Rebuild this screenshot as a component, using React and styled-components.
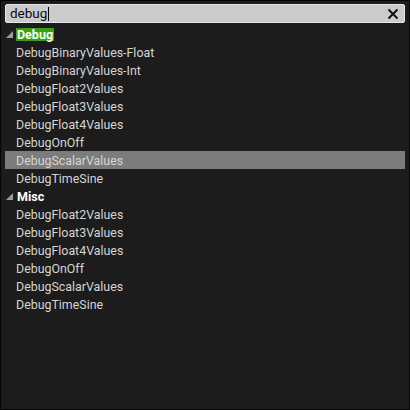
import styled, { createGlobalStyle } from "styled-components";

const Global = createGlobalStyle`
    html, body {
        margin: 0;
        padding: 0;
        background: #1b1b1b;
    }
    body {
        font-family: Roboto, "Liberation Sans", sans-serif;
    }
`;

const Panel = styled.main`
    box-sizing: border-box;
    width: 410px;
    height: 410px;
    background: #1c1c1c;
    border: 1px solid #050505;
    padding: 3px 4px 0 4px;
    display: flex;
    flex-direction: column;
`;

const SearchBox = styled.div`
    box-sizing: border-box;
    height: 19px;
    display: flex;
    align-items: center;
    background: #cbcbcb;
    border: 1px solid #e6e6e6;
    border-radius: 2px;
    padding: 0 5px 0 4px;
`;

const SearchText = styled.span`
    flex: 1;
    font-size: 13.5px;
    color: #0d0d0d;
    line-height: 17px;
    display: flex;
    align-items: center;
`;

const Caret = styled.span`
    display: inline-block;
    width: 1px;
    height: 14px;
    background: #000;
    margin-left: 1px;
`;

const ClearButton = styled.span`
    display: flex;
    width: 12px;
    height: 12px;
`;

const List = styled.div`
    display: flex;
    flex-direction: column;
    margin-top: 2px;
`;

const Row = styled.div`
    height: 18px;
    display: flex;
    align-items: center;
    font-size: ${(p) => (p.$header ? "12.5px" : "12.4px")};
    padding-left: ${(p) => (p.$header ? "1px" : "11px")};
    color: ${(p) => (p.$header ? "#ffffff" : "#d4d4d4")};
    font-weight: ${(p) => (p.$header ? 700 : 400)};
    background: ${(p) => (p.$selected ? "#7c7c7c" : "transparent")};
`;

const Arrow = styled.span`
    width: 0;
    height: 0;
    border-left: 7px solid transparent;
    border-bottom: 7px solid #9a9a9a;
    margin-right: 3px;
    margin-top: 1px;
`;

const Match = styled.span`
    background: ${(p) => (p.$on ? "#39a10f" : "transparent")};
    padding: 0 1px;
    line-height: 13px;
`;

const groups = [
    {
        name: "Debug",
        match: true,
        items: [
            "DebugBinaryValues-Float",
            "DebugBinaryValues-Int",
            "DebugFloat2Values",
            "DebugFloat3Values",
            "DebugFloat4Values",
            "DebugOnOff",
            "DebugScalarValues",
            "DebugTimeSine",
        ],
        selected: 6,
    },
    {
        name: "Misc",
        match: false,
        items: [
            "DebugFloat2Values",
            "DebugFloat3Values",
            "DebugFloat4Values",
            "DebugOnOff",
            "DebugScalarValues",
            "DebugTimeSine",
        ],
        selected: -1,
    },
];

function App() {
    return (
        <>
            <Global />
            <Panel>
                <SearchBox>
                    <SearchText>
                        debug
                        <Caret />
                    </SearchText>
                    <ClearButton>
                        <svg width="12" height="12" viewBox="0 0 12 12">
                            <path
                                d="M1.5 1.5 L10.5 10.5 M10.5 1.5 L1.5 10.5"
                                stroke="#111"
                                strokeWidth="2"
                                fill="none"
                            />
                        </svg>
                    </ClearButton>
                </SearchBox>
                <List>
                    {groups.map((g) => (
                        <div key={g.name}>
                            <Row $header>
                                <Arrow />
                                <Match $on={g.match}>{g.name}</Match>
                            </Row>
                            {g.items.map((item, i) => (
                                <Row key={item} $selected={i === g.selected}>
                                    {item}
                                </Row>
                            ))}
                        </div>
                    ))}
                </List>
            </Panel>
        </>
    );
}

export default App;
